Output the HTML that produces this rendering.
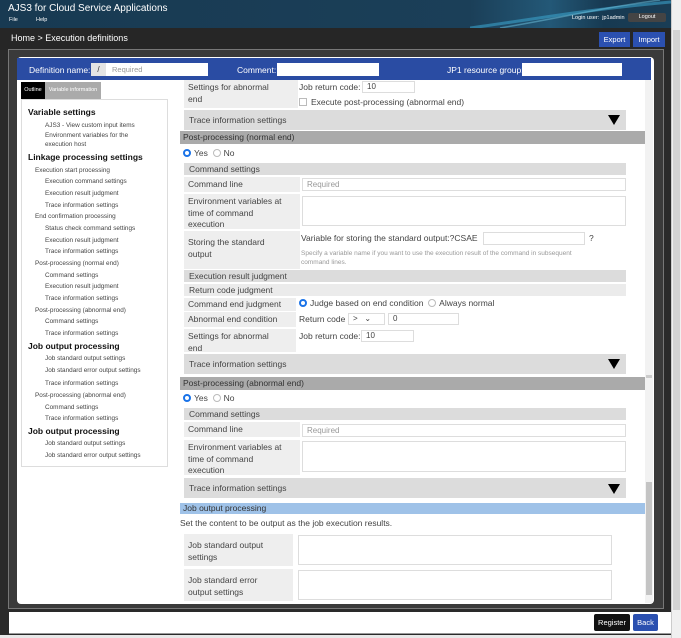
<!DOCTYPE html>
<html><head><meta charset="utf-8"><style>
*{margin:0;padding:0;box-sizing:border-box}
body{width:681px;height:638px;overflow:hidden;background:#2a2a2a;font-family:"Liberation Sans",sans-serif;position:relative;color:#333}
.a{position:absolute}
.t{font-size:8.5px;line-height:11px;color:#444}
.lab{position:absolute;background:#eeeeee;font-size:8.5px;line-height:11.5px;color:#444;padding:2px 4px}
.bar{position:absolute;background:#dcdcdc;font-size:8.5px;color:#444;padding-left:5px}
.sec{position:absolute;background:#aaaaaa;font-size:8.5px;color:#333;padding-left:3px;left:180px;width:465px;height:13px;line-height:13px}
.inp{position:absolute;background:#fff;border:1px solid #ddd;font-size:8px;color:#999;padding-left:4px}
.tri{position:absolute;width:0;height:0;border-left:6px solid transparent;border-right:6px solid transparent;border-top:10px solid #000}
.rad{display:inline-block;width:8px;height:8px;border-radius:50%;border:1px solid #bbb;vertical-align:-1px;margin-right:3px;background:#fff}
.radon{border:2.5px solid #1a73e8}
.nav div{font-size:6.4px;color:#444;line-height:11.65px;white-space:nowrap}
.nav .h{font-size:8.5px;font-weight:bold;color:#111;line-height:13.5px}
.nav .l1{padding-left:7px}
.nav .l2{padding-left:17px}
</style></head><body>
<div class="a" style="left:0;top:0;width:671px;height:28px;background:linear-gradient(90deg,#183a52 0%,#1b3f58 70%,#235877 82%,#173a52 90%,#1a3d55 100%)"></div>
<svg class="a" style="left:470px;top:0" width="201" height="28"><path d="M0 28 C60 20 110 10 201 2" stroke="#3aa0c8" stroke-width="3" fill="none" opacity=".6"/><path d="M30 28 C90 18 130 8 190 0" stroke="#6fc3e0" stroke-width="1.5" fill="none" opacity=".5"/></svg>
<div class="a" style="left:8px;top:3px;font-size:10px;color:#fff">AJS3 for Cloud Service Applications</div>
<div class="a" style="left:9px;top:17px;font-size:5.5px;color:#fff">File</div>
<div class="a" style="left:36px;top:17px;font-size:5.5px;color:#fff">Help</div>
<div class="a" style="left:572px;top:15px;font-size:5.5px;color:#fff">Login user:&nbsp; jp1admin</div>
<div class="a" style="left:628px;top:13px;width:38px;height:9px;background:#444;border-radius:2px;font-size:5.5px;color:#fff;text-align:center;line-height:9px">Logout</div>
<div class="a" style="left:0;top:28px;width:671px;height:22px;background:#262626"></div>
<div class="a" style="left:11px;top:33px;font-size:9px;color:#fff">Home &gt; Execution definitions</div>
<div class="a" style="left:599px;top:32px;width:31px;height:15px;background:#2b50b0;font-size:7.5px;color:#fff;text-align:center;line-height:15px">Export</div>
<div class="a" style="left:633px;top:32px;width:32px;height:15px;background:#2b50b0;font-size:7.5px;color:#fff;text-align:center;line-height:15px">Import</div>
<div class="a" style="left:8px;top:49px;width:656px;height:560px;background:#3a3a3a;border:1px solid #777"></div>
<div class="a" style="left:17px;top:57px;width:637px;height:547px;background:#fff;border-radius:4px"></div>
<div class="a" style="left:671px;top:0;width:10px;height:638px;background:#f0f0f0;border-left:1px solid #ccc"></div>
<div class="a" style="left:673px;top:30px;width:7px;height:580px;background:#d4d4d4"></div>
<div class="a" style="left:17px;top:58px;width:634px;height:22px;background:#2a4ca3"></div>
<div class="a" style="left:29px;top:65px;font-size:8.5px;color:#fff">Definition name:</div>
<div class="a" style="left:91px;top:63px;width:117px;height:13px;background:#fff"></div>
<div class="a" style="left:91px;top:63px;width:15px;height:13px;background:#e4e4e4;font-size:8px;text-align:center;line-height:13px;color:#333">/</div>
<div class="a" style="left:112px;top:65px;font-size:7.5px;color:#999">Required</div>
<div class="a" style="left:237px;top:65px;font-size:8.5px;color:#fff">Comment:</div>
<div class="a" style="left:277px;top:63px;width:102px;height:13px;background:#fff"></div>
<div class="a" style="left:447px;top:65px;font-size:8.5px;color:#fff">JP1 resource group:</div>
<div class="a" style="left:522px;top:63px;width:100px;height:13px;background:#fff"></div>
<div class="a" style="left:21px;top:82px;width:24px;height:17px;background:#000;color:#fff;font-size:5.5px;line-height:17px;text-align:center">Outline</div>
<div class="a" style="left:45px;top:82px;width:56px;height:17px;background:#aaa;color:#fff;font-size:5.5px;line-height:17px;text-align:center">Variable information</div>
<div class="a nav" style="left:21px;top:99px;width:147px;height:368px;border:1px solid #ddd;padding:6px 0 0 6px">
<div class="h">Variable settings</div>
<div class="l2">AJS3 - View custom input items</div>
<div class="l2" style="line-height:9px;margin-bottom:2px">Environment variables for the<br>execution host</div>
<div class="h">Linkage processing settings</div>
<div class="l1">Execution start processing</div>
<div class="l2">Execution command settings</div>
<div class="l2">Execution result judgment</div>
<div class="l2">Trace information settings</div>
<div class="l1">End confirmation processing</div>
<div class="l2">Status check command settings</div>
<div class="l2">Execution result judgment</div>
<div class="l2">Trace information settings</div>
<div class="l1">Post-processing (normal end)</div>
<div class="l2">Command settings</div>
<div class="l2">Execution result judgment</div>
<div class="l2">Trace information settings</div>
<div class="l1">Post-processing (abnormal end)</div>
<div class="l2">Command settings</div>
<div class="l2">Trace information settings</div>
<div class="h">Job output processing</div>
<div class="l2">Job standard output settings</div>
<div class="l2" style="margin-bottom:2px">Job standard error output settings</div>
<div class="l2">Trace information settings</div>
<div class="l1">Post-processing (abnormal end)</div>
<div class="l2">Command settings</div>
<div class="l2">Trace information settings</div>
<div class="h">Job output processing</div>
<div class="l2">Job standard output settings</div>
<div class="l2">Job standard error output settings</div>
</div>
<div class="a" style="left:645px;top:80px;width:8px;height:523px;background:#f2f2f2"></div>
<div class="a" style="left:646px;top:482px;width:6px;height:113px;background:#c4c4c4"></div>
<div class="a" style="left:646px;top:375px;width:6px;height:3px;background:#ccc"></div>
<div class="lab" style="left:184px;top:80px;width:114px;height:28px">Settings for abnormal<br>end</div>
<div class="a t" style="left:299px;top:82px">Job return code:</div>
<div class="inp" style="left:362px;top:81px;width:53px;height:12px;color:#444;line-height:10px">10</div>
<div class="a t" style="left:299px;top:97px"><span style="display:inline-block;width:8px;height:8px;border:1px solid #bbb;vertical-align:-1px;margin-right:4px"></span>Execute post-processing (abnormal end)</div>
<div class="bar" style="left:184px;top:110px;width:442px;height:20px;line-height:20px">Trace information settings</div>
<div class="tri" style="left:608px;top:115px"></div>
<div class="sec" style="top:131px">Post-processing (normal end)</div>
<div class="a t" style="left:183px;top:148px"><span class="rad radon"></span>Yes &nbsp;<span class="rad"></span>No</div>
<div class="bar" style="left:184px;top:163px;width:442px;height:12px;line-height:12px">Command settings</div>
<div class="lab" style="left:184px;top:177px;width:116px;height:15px">Command line</div>
<div class="inp" style="left:302px;top:178px;width:324px;height:13px;line-height:11px">Required</div>
<div class="lab" style="left:184px;top:194px;width:116px;height:35px">Environment variables at<br>time of command<br>execution</div>
<div class="inp" style="left:302px;top:196px;width:324px;height:30px"></div>
<div class="lab" style="left:184px;top:231px;width:116px;height:38px;padding-top:6px">Storing the standard<br>output</div>
<div class="a t" style="left:301px;top:233px">Variable for storing the standard output:?CSAE</div>
<div class="inp" style="left:483px;top:232px;width:102px;height:13px"></div>
<div class="a t" style="left:589px;top:233px">?</div>
<div class="a" style="left:301px;top:249px;font-size:6.5px;line-height:9px;color:#999">Specify a variable name if you want to use the execution result of the command in subsequent<br>command lines.</div>
<div class="bar" style="left:184px;top:270px;width:442px;height:12px;line-height:12px">Execution result judgment</div>
<div class="bar" style="left:184px;top:284px;width:442px;height:12px;line-height:12px;background:#ebebeb">Return code judgment</div>
<div class="lab" style="left:184px;top:298px;width:112px;height:13px;padding-top:1px">Command end judgment</div>
<div class="a t" style="left:299px;top:298px"><span class="rad radon"></span>Judge based on end condition &nbsp;<span class="rad"></span>Always normal</div>
<div class="lab" style="left:184px;top:312px;width:112px;height:15px">Abnormal end condition</div>
<div class="a t" style="left:299px;top:314px">Return code</div>
<div class="inp" style="left:348px;top:313px;width:37px;height:12px;color:#444;line-height:10px">&gt; &nbsp;&nbsp;⌄</div>
<div class="inp" style="left:388px;top:313px;width:71px;height:12px;color:#444;line-height:10px">0</div>
<div class="lab" style="left:184px;top:329px;width:112px;height:23px">Settings for abnormal<br>end</div>
<div class="a t" style="left:299px;top:331px">Job return code:</div>
<div class="inp" style="left:361px;top:330px;width:53px;height:12px;color:#444;line-height:10px">10</div>
<div class="bar" style="left:184px;top:354px;width:442px;height:20px;line-height:20px">Trace information settings</div>
<div class="tri" style="left:608px;top:359px"></div>
<div class="sec" style="top:377px">Post-processing (abnormal end)</div>
<div class="a t" style="left:183px;top:393px"><span class="rad radon"></span>Yes &nbsp;<span class="rad"></span>No</div>
<div class="bar" style="left:184px;top:408px;width:442px;height:12px;line-height:12px">Command settings</div>
<div class="lab" style="left:184px;top:422px;width:116px;height:15px">Command line</div>
<div class="inp" style="left:302px;top:424px;width:324px;height:13px;line-height:11px">Required</div>
<div class="lab" style="left:184px;top:440px;width:116px;height:35px">Environment variables at<br>time of command<br>execution</div>
<div class="inp" style="left:302px;top:441px;width:324px;height:31px"></div>
<div class="bar" style="left:184px;top:478px;width:442px;height:20px;line-height:20px">Trace information settings</div>
<div class="tri" style="left:608px;top:484px"></div>
<div class="a" style="left:180px;top:503px;width:465px;height:11px;background:#9fc2e8;font-size:8.5px;line-height:11px;padding-left:3px;color:#333">Job output processing</div>
<div class="a t" style="left:180px;top:518px">Set the content to be output as the job execution results.</div>
<div class="lab" style="left:184px;top:534px;width:109px;height:32px;padding:6px 4px">Job standard output<br>settings</div>
<div class="inp" style="left:298px;top:535px;width:314px;height:30px"></div>
<div class="lab" style="left:184px;top:569px;width:109px;height:32px;padding:6px 4px">Job standard error<br>output settings</div>
<div class="inp" style="left:298px;top:570px;width:314px;height:30px"></div>
<div class="a" style="left:9px;top:612px;width:662px;height:22px;background:#fff;border-bottom:1px solid #999"></div>
<div class="a" style="left:0;top:635px;width:671px;height:3px;background:#e8e8e8"></div>
<div class="a" style="left:594px;top:614px;width:36px;height:17px;background:#111;border-radius:2px;font-size:7.5px;color:#fff;text-align:center;line-height:17px">Register</div>
<div class="a" style="left:633px;top:614px;width:25px;height:17px;background:#2b50b0;border-radius:2px;font-size:7.5px;color:#fff;text-align:center;line-height:17px">Back</div>
</body></html>
